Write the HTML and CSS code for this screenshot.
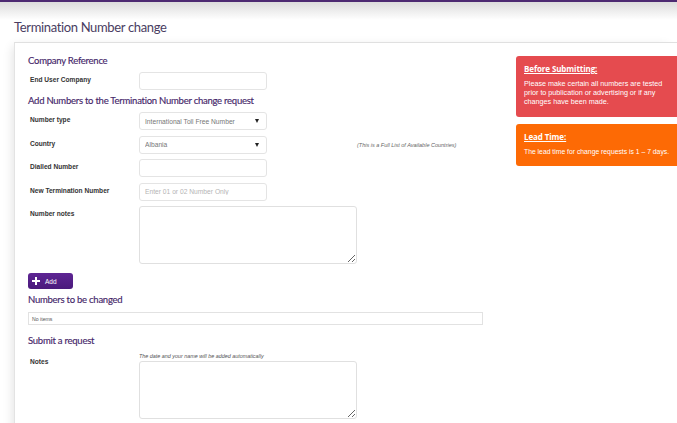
FILE: index.html
```html
<!DOCTYPE html>
<html lang="en">
<head>
<meta charset="UTF-8">
<meta name="viewport" content="width=device-width, initial-scale=1.0">
<title>Termination Number change</title>
<link rel="stylesheet" href="styles.css">
</head>
<body>
<div class="topbar"></div>
<h1 class="page-title">Termination Number change</h1>
<div class="panel">
    <div class="form-col">
        <h2 class="section">Company Reference</h2>
        <div class="row">
            <label for="endUser">End User Company</label>
            <input type="text" id="endUser" class="field">
        </div>

        <h2 class="section">Add Numbers to the Termination Number change request</h2>
        <div class="row">
            <label for="numberType">Number type</label>
            <div class="select-wrap">
                <select id="numberType" class="field">
                    <option>International Toll Free Number</option>
                </select>
            </div>
        </div>
        <div class="row">
            <label for="country">Country</label>
            <div class="select-wrap">
                <select id="country" class="field">
                    <option>Albania</option>
                </select>
            </div>
            <span class="hint">(This is a Full List of Available Countries)</span>
        </div>
        <div class="row">
            <label for="dialled">Dialled Number</label>
            <input type="text" id="dialled" class="field">
        </div>
        <div class="row">
            <label for="newTerm">New Termination Number</label>
            <input type="text" id="newTerm" class="field" placeholder="Enter 01 or 02 Number Only">
        </div>
        <div class="row">
            <label for="numberNotes">Number notes</label>
            <textarea id="numberNotes" class="area"></textarea>
        </div>

        <button class="add-btn"><span class="plus"></span>Add</button>

        <h2 class="section section-list">Numbers to be changed</h2>
        <div class="items">No items</div>

        <h2 class="section section-submit">Submit a request</h2>
        <div class="row notes-row">
            <label for="notes">Notes</label>
            <div class="notes-field">
                <p class="auto-note">The date and your name will be added automatically</p>
                <textarea id="notes" class="area"></textarea>
            </div>
        </div>
    </div>

    <div class="side-col">
        <div class="notice notice-red">
            <h3>Before Submitting:</h3>
            <p>Please make certain all numbers are tested prior to publication or advertising or if any changes have been made.</p>
        </div>
        <div class="notice notice-orange">
            <h3>Lead Time:</h3>
            <p>The lead time for change requests is 1 &ndash; 7 days.</p>
        </div>
    </div>
</div>
</body>
</html>
```

FILE: styles.css
```css
body {
    margin: 0;
    padding: 0;
    background-color: #fff;
    font-family: "Liberation Sans", Arial, sans-serif;
    overflow: hidden;
}

.topbar {
    height: 18px;
    border-top: 2px solid #4d2a72;
    background: linear-gradient(#dcdcdc, #fff);
}

.page-title {
    margin: 0 0 0 14px;
    height: 22px;
    line-height: 15px;
    font-family: Lato, sans-serif;
    font-size: 13px;
    font-weight: 400;
    color: #4a3d62;
    letter-spacing: -0.35px;
}

.panel {
    display: flex;
    margin-left: 14px;
    border-top: 1px solid #e0e0e0;
    border-left: 1px solid #e3e3e3;
    box-shadow: -5px 0 10px -4px rgba(0, 0, 0, 0.12);
    min-height: 400px;
}

.form-col {
    width: 470px;
    padding: 11px 0 0 13px;
}

.section {
    margin: 0;
    height: 14px;
    line-height: 14px;
    font-family: Lato, sans-serif;
    font-size: 9.5px;
    font-weight: 400;
    color: #46276a;
    letter-spacing: -0.25px;
    -webkit-text-stroke: 0.15px #46276a;
}

.row {
    display: flex;
    align-items: flex-start;
    margin-top: 4px;
}

.section + .row {
    margin-top: 4px;
}

.row + .row {
    margin-top: 5.5px;
}

.row + .section {
    margin-top: 4px;
}

.row label {
    width: 109px;
    padding-left: 2px;
    padding-top: 4px;
    font-size: 6.6px;
    font-weight: bold;
    color: #333;
}

.field {
    box-sizing: border-box;
    width: 128px;
    height: 18px;
    margin: 0;
    padding: 0 5px;
    border: 1px solid #e4e4e4;
    border-radius: 3px;
    background: #fff;
    font-family: "Liberation Sans", Arial, sans-serif;
    font-size: 6.7px;
    color: #777;
    outline: none;
}

.field::placeholder {
    color: #b5b5b5;
}

select.field {
    display: block;
    -webkit-appearance: none;
    appearance: none;
}

.select-wrap {
    position: relative;
    display: flex;
}

.select-wrap::after {
    content: "";
    position: absolute;
    right: 8px;
    top: 7px;
    border-left: 2px solid transparent;
    border-right: 2px solid transparent;
    border-top: 4px solid #222;
}

.hint {
    margin-left: 90px;
    padding-top: 6px;
    font-size: 5.5px;
    font-style: italic;
    color: #666;
}

.area {
    display: block;
    box-sizing: border-box;
    width: 218px;
    height: 58px;
    margin: 0;
    border: 1px solid #e0e0e0;
    border-radius: 3px;
    outline: none;
}

.add-btn {
    display: flex;
    align-items: center;
    gap: 5px;
    width: 45px;
    height: 16px;
    margin-top: 9px;
    padding: 0 4px;
    border: none;
    border-radius: 3px;
    background: linear-gradient(#5e2594, #4a1a7c);
    color: #fff;
    font-family: "Liberation Sans", Arial, sans-serif;
    font-size: 6.5px;
    cursor: pointer;
}

.plus {
    position: relative;
    width: 8px;
    height: 8px;
}

.plus::before,
.plus::after {
    content: "";
    position: absolute;
    background: #fff;
}

.plus::before {
    left: 0;
    top: 3px;
    width: 8px;
    height: 2.4px;
}

.plus::after {
    left: 3px;
    top: 0;
    width: 2.4px;
    height: 8px;
}

.section-list {
    margin-top: 4px;
}

.items {
    box-sizing: border-box;
    width: 455px;
    height: 13px;
    margin-top: 5px;
    padding: 3px 3px 0;
    border: 1px solid #e2e2e2;
    font-size: 5.2px;
    color: #555;
}

.section-submit {
    margin-top: 9px;
}

.notes-row {
    margin-top: 4px;
}

.notes-row label {
    padding-top: 6px;
}

.auto-note {
    margin: 0 0 1px;
    height: 8px;
    line-height: 8px;
    font-size: 5.4px;
    font-style: italic;
    color: #555;
}

.side-col {
    margin-left: auto;
    width: 161px;
    padding-top: 13px;
}

.notice {
    padding: 7px 4px 8px 8px;
    border-radius: 3px 0 0 3px;
    color: #fff;
}

.notice h3 {
    margin: 0 0 5px;
    font-family: "Open Sans", sans-serif;
    font-size: 8px;
    font-weight: 700;
    text-decoration: underline;
    letter-spacing: -0.1px;
}

.notice p {
    margin: 0;
    font-size: 6.8px;
    line-height: 9px;
}

.notice-red {
    height: 46px;
    background-color: #e54b4f;
}

.notice-red p {
    font-size: 7.2px;
}

.notice-orange {
    margin-top: 7px;
    height: 27px;
    background-color: #fd6a05;
}
```
